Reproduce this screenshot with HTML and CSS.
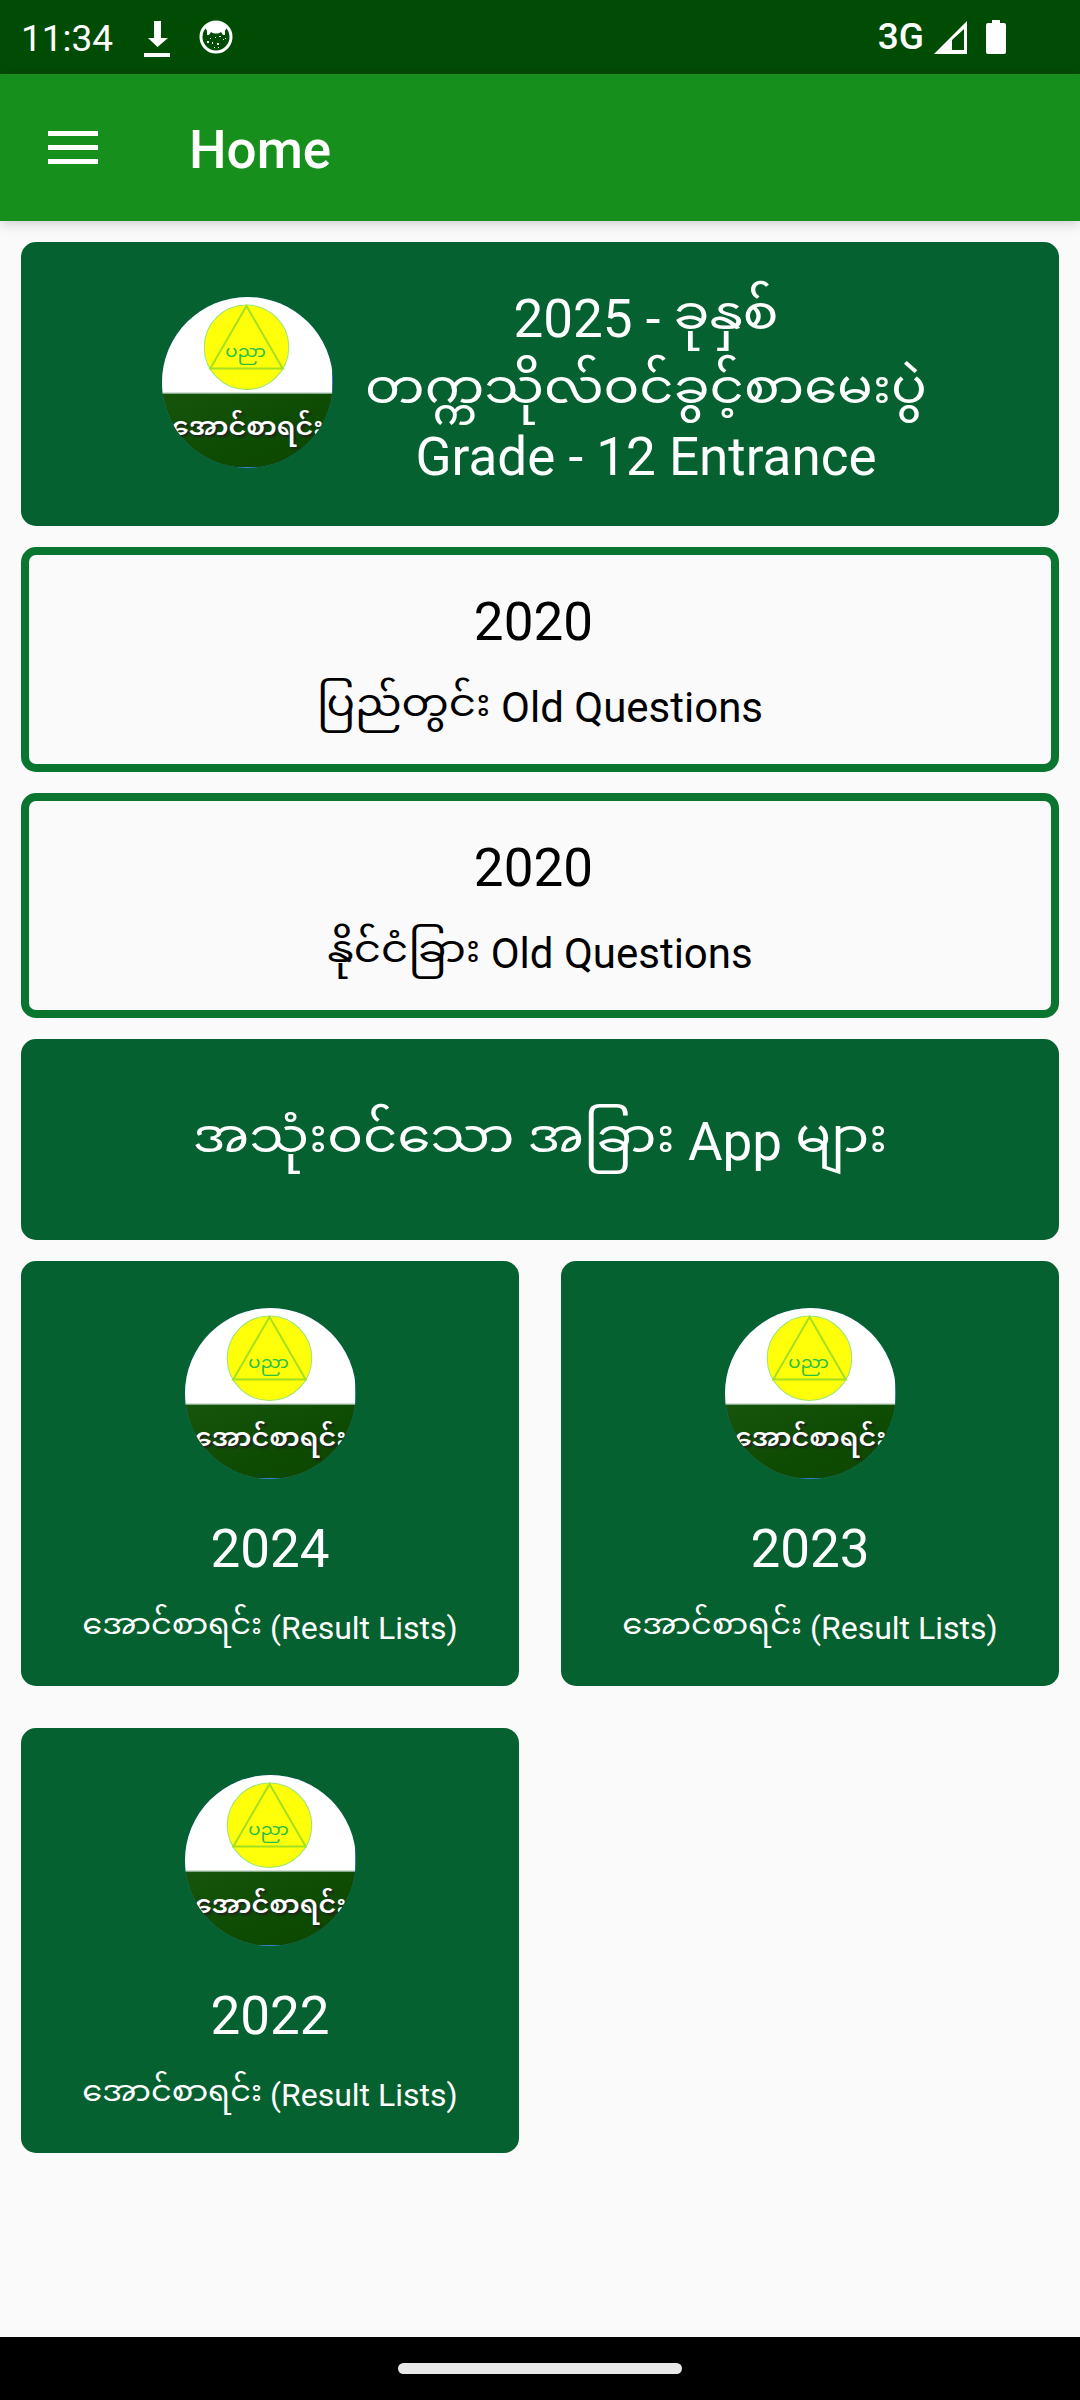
FILE: index.html
```html
<!DOCTYPE html>
<html lang="en">
<head>
<meta charset="utf-8">
<meta name="viewport" content="width=device-width, initial-scale=1">
<title>Home</title>
<link rel="stylesheet" href="styles.css">
</head>
<body>
<svg class="defs" width="0" height="0" aria-hidden="true">
  <defs>
    <linearGradient id="band" x1="0" y1="0" x2="1" y2="1">
      <stop offset="0" stop-color="#18550c"/>
      <stop offset="0.6" stop-color="#0d4a02"/>
      <stop offset="1" stop-color="#0d4800"/>
    </linearGradient>
    <clipPath id="disc"><circle cx="85" cy="85" r="85"/></clipPath>
    <symbol id="logo" viewBox="0 0 170 170">
      <g clip-path="url(#disc)">
        <rect width="170" height="170" fill="#3f7fd8"/>
        <rect width="169" height="96" fill="#fff"/>
        <rect y="96" width="169" height="73" fill="url(#band)"/>
        <rect y="95" width="169" height="1" fill="#9db996"/>
        <circle cx="84" cy="50" r="42" fill="#ffff0a" stroke="#9be66e"/>
        <path d="M84 9 48 71H120Z" fill="none" stroke="#a5e01e" stroke-width="2"/>
        <text class="logo-word" x="83" y="63">ပညာ</text>
        <text class="logo-title" x="85" y="141">အောင်စာရင်း</text>
      </g>
    </symbol>
  </defs>
</svg>

<div class="screen">
  <div class="status-bar">
    <span class="clock">11:34</span>
    <svg class="download" width="26" height="36" viewBox="0 0 26 36"><path fill="#fff" d="M10 0h7v17h7L13.500 26 4 17h6zM0 32h26v4H0z"/></svg>
    <svg width="34" height="34" viewBox="0 0 34 34">
      <circle cx="17" cy="17" r="15" fill="none" stroke="#fff" stroke-width="3"/>
      <path fill="#fff" d="M6 7 C11 0 23 0 28 7 L26 11 L26 15 H24 L22 12 C19 14 15 14 12 12 L10 15 H8 L8 11z"/>
      <g fill="#fff"><rect x="8" y="21" width="2" height="2"/><rect x="13" y="22" width="1" height="2"/><rect x="16" y="17" width="1" height="1"/><rect x="18" y="23" width="2" height="2"/><rect x="20" y="16" width="2" height="1"/><rect x="24" y="19" width="1" height="1"/><rect x="26" y="18" width="1" height="1"/><rect x="11" y="18" width="1" height="1"/><rect x="15" y="27" width="1" height="1"/><rect x="19" y="27" width="1" height="1"/></g>
    </svg>
    <div class="status-end">
      <span class="network">3G</span>
      <svg width="33" height="33" viewBox="0 0 33 33"><path fill="#fff" fill-rule="evenodd" d="M33 0V33H0zM30 8 18 19V29H30z"/></svg>
      <svg class="battery" width="20" height="34" viewBox="0 0 20 34"><path fill="#fff" d="M6 0h8v3h4q2 0 2 2v27q0 2-2 2H2q-2 0-2-2V5q0-2 2-2h4z"/></svg>
    </div>
  </div>

  <header class="app-bar">
    <button class="menu" type="button" aria-label="Menu">
      <svg width="50" height="34" viewBox="0 0 50 34"><path fill="#fff" d="M0 0h50v5H0zM0 14h50v5H0zM0 28h50v5H0z"/></svg>
    </button>
    <h1 class="title">Home</h1>
  </header>

  <main class="content">
    <a class="card filled hero" href="#">
      <svg class="logo" aria-hidden="true"><use href="#logo"/></svg>
      <span class="hero-text">
        <span>2025 - <span lang="my">ခုနှစ်</span></span>
        <span lang="my">တက္ကသိုလ်ဝင်ခွင့်စာမေးပွဲ</span>
        <span class="grade">Grade - 12 Entrance</span>
      </span>
    </a>
    <a class="card outlined" href="#">
      <span class="year">2020&nbsp;</span>
      <span class="label"><span lang="my">ပြည်တွင်း</span> Old Questions</span>
    </a>
    <a class="card outlined" href="#">
      <span class="year">2020&nbsp;</span>
      <span class="label"><span lang="my">နိုင်ငံခြား</span> Old Questions</span>
    </a>
    <a class="card filled apps" href="#">
      <span class="year"><span lang="my">အသုံးဝင်သော အခြား</span> App <span lang="my">များ</span></span>
    </a>
    <div class="results">
      <a class="card filled result" href="#">
        <svg class="logo" aria-hidden="true"><use href="#logo"/></svg>
        <span class="year">2024</span>
        <span class="caption"><span lang="my">အောင်စာရင်း</span> (Result Lists)</span>
      </a>
      <a class="card filled result" href="#">
        <svg class="logo" aria-hidden="true"><use href="#logo"/></svg>
        <span class="year">2023</span>
        <span class="caption"><span lang="my">အောင်စာရင်း</span> (Result Lists)</span>
      </a>
      <a class="card filled result" href="#">
        <svg class="logo" aria-hidden="true"><use href="#logo"/></svg>
        <span class="year">2022</span>
        <span class="caption"><span lang="my">အောင်စာရင်း</span> (Result Lists)</span>
      </a>
    </div>
  </main>

  <div class="nav-bar"><div class="handle"></div></div>
</div>
</body>
</html>
```
FILE: styles.css
```css
* {
  box-sizing: border-box;
}

body {
  margin: 0;
  background: #fafafa;
  font-family: Roboto, "Noto Sans Myanmar UI", "Noto Sans Myanmar", Padauk, sans-serif;
  color: #000;
}

.defs {
  position: absolute;
}

.screen {
  display: flex;
  flex-direction: column;
  min-height: 100vh;
}

.status-bar {
  display: flex;
  align-items: center;
  height: 74px;
  padding: 0 74px 0 21px;
  background: #004c05;
  color: #fff;
  font-size: 37px;
  line-height: 48px;
}

.clock {
  padding-top: 4px;
}

.download {
  margin: 3px 29px 0 31px;
}

.status-end {
  display: flex;
  align-items: center;
  margin-left: auto;
}

.network {
  margin-right: 10px;
  font-weight: 500;
}

.battery {
  margin-left: 19px;
}

.app-bar {
  display: flex;
  align-items: center;
  height: 147px;
  padding: 0 48px;
  background: #178f1c;
  color: #fff;
  box-shadow: 0 2px 12px rgba(0, 0, 0, 0.2);
}

.menu {
  display: flex;
  padding: 0;
  border: 0;
  background: none;
}

.title {
  margin: 0 0 0 91px;
  padding-top: 4px;
  font-size: 53px;
  line-height: 64px;
  font-weight: 500;
}

.content {
  display: flex;
  flex-direction: column;
  flex: 1;
  gap: 21px;
  padding: 21px;
}

.card {
  display: flex;
  align-items: center;
  justify-content: center;
  border-radius: 15px;
  text-align: center;
  text-decoration: none;
}

.filled {
  background: #05612f;
  color: #fff;
}

.logo {
  flex: none;
  width: 171px;
  height: 171px;
}

.logo-word {
  font-size: 18px;
  text-anchor: middle;
  fill: #28be46;
}

.logo-title {
  font-size: 27px;
  font-weight: 600;
  text-anchor: middle;
  fill: #fff;
  text-shadow: 2px 2px 2px #222;
}

.hero {
  gap: 32px;
  height: 284px;
  padding: 0 0 3px 9px;
}

.hero-text {
  display: flex;
  flex-direction: column;
  font-size: 53px;
  line-height: 74px;
}

.grade {
  line-height: 54px;
}

.outlined {
  flex-direction: column;
  gap: 16px;
  height: 225px;
  padding-top: 11px;
  border: 8px solid #0a752e;
  color: #000;
}

.year {
  font-size: 53px;
  line-height: 69px;
}

.label {
  font-size: 42px;
  line-height: 69px;
}

.caption {
  font-size: 32px;
  line-height: 48px;
}

.apps {
  height: 201px;
  padding-top: 6px;
}

.results {
  display: grid;
  grid-template-columns: 1fr 1fr;
  gap: 42px;
}

.result {
  flex-direction: column;
  justify-content: flex-start;
  height: 425px;
  padding-top: 47px;
}

.result .year {
  margin: 36px 0 20px;
}

.nav-bar {
  display: flex;
  align-items: center;
  justify-content: center;
  height: 63px;
  background: #000;
}

.handle {
  width: 284px;
  height: 11px;
  border-radius: 6px;
  background: #e8e8e8;
}
```
